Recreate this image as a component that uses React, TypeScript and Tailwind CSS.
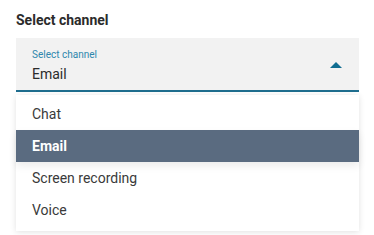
import React from "react";

export default function App() {
  const options = ["Chat", "Email", "Screen recording", "Voice"];
  return (
    <div
      className="w-[374px] h-[235px] bg-white overflow-hidden px-4 pt-[11px]"
      style={{ fontFamily: 'Roboto, "Noto Sans", sans-serif' }}
    >
      <div className="text-[14px] font-bold text-[#2b2b2b] leading-[18px]">Select channel</div>
      <div className="mt-[9px] w-[343px] relative">
        <div className="h-[54px] bg-[#f2f2f2] border-b-2 border-[#1f6e8f] flex items-center justify-between pl-4 pr-[17px]">
          <div className="flex flex-col mt-[4px]">
            <span className="text-[10px] leading-[14px] text-[#2d87ad]">Select channel</span>
            <span className="text-[14px] leading-[20px] text-[#2b2b2b] mt-[2px]">Email</span>
          </div>
          <svg width="12" height="6" viewBox="0 0 12 6" className="mt-[1px]">
            <polygon points="0,6 6,0 12,6" fill="#106d91" />
          </svg>
        </div>
        <div className="mt-[3px] bg-white shadow-[0_1px_6px_rgba(0,0,0,0.12)] pt-[3px] pb-[5px]">
          {options.map((o) => (
            <div
              key={o}
              className={
                o === "Email"
                  ? "h-[32px] flex items-center px-4 text-[14px] font-bold text-white bg-[#5a6b80] shadow-[0_4px_8px_rgba(0,0,0,0.08)]"
                  : "h-[32px] flex items-center px-4 text-[14px] text-[#3a3a3a]"
              }
            >
              {o}
            </div>
          ))}
        </div>
      </div>
    </div>
  );
}
